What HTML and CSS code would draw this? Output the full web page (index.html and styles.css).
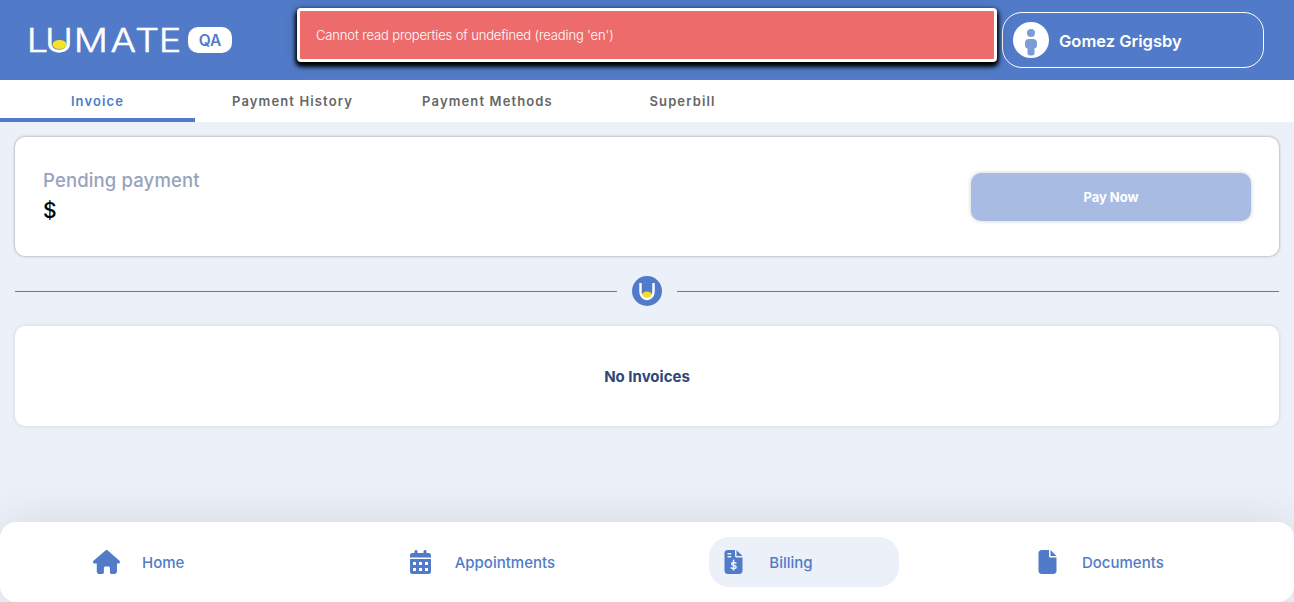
FILE: index.html
```
<!DOCTYPE html>
<html lang="en">
<head>
<meta charset="utf-8">
<title>Billing</title>
<link rel="stylesheet" href="styles.css">
</head>
<body>
<header class="header">
  <div class="brand">
    <svg class="logo" width="156" height="40" viewBox="0 0 156 40">
      <text class="logo-text" transform="scale(1.15 1)" y="32" x="0.600 16.600 41.600 73.500 94.800 115.500">LUMATE</text>
      <ellipse cx="33.500" cy="24.500" rx="7" ry="4.500" fill="#f4e428"/>
    </svg>
    <span class="badge">QA</span>
  </div>
  <div class="user">
    <svg class="avatar" width="36" height="36" viewBox="0 0 36 36">
      <circle cx="18" cy="18" r="18" fill="#fff"/>
      <circle cx="18" cy="11" r="4" fill="#7b9cd8"/>
      <path d="M16 17h4q4 0 4 4v2q0 3-2.500 3.500V31q0 2.500-2.500 2.500h-2q-2.500 0-2.500-2.500v-4.500Q12 26 12 23v-2q0-4 4-4z" fill="#7b9cd8"/>
    </svg>
    <span class="user-name">Gomez Grigsby</span>
  </div>
</header>
<div class="toast" role="alert"><span class="toast-text">Cannot read properties of undefined (reading 'en')</span></div>
<nav class="tabs">
  <a class="tab active"><span>Invoice</span></a>
  <a class="tab"><span>Payment History</span></a>
  <a class="tab"><span>Payment Methods</span></a>
  <a class="tab"><span>Superbill</span></a>
</nav>
<main class="content">
  <section class="card pending">
    <div class="amount">
      <span class="caption">Pending payment</span>
      <span class="value">$</span>
    </div>
    <button class="pay" disabled>Pay Now</button>
  </section>
  <div class="divider">
    <span class="line"></span>
    <svg width="30" height="30" viewBox="0 0 30 30">
      <circle cx="15" cy="15" r="15" fill="#517bc8"/>
      <ellipse cx="15" cy="19" rx="5" ry="3.500" fill="#ecdf24"/>
      <path d="M8.500 7v9a6.500 7 0 0 0 13 0V7" fill="none" stroke="#fff" stroke-width="2.400"/>
    </svg>
    <span class="line"></span>
  </div>
  <section class="card empty"><span>No Invoices</span></section>
</main>
<nav class="bottom">
  <a class="item home">
    <svg width="27" height="24" viewBox="0 0 576 512"><path d="M575.800 255.500c0 18-15 32.100-32 32.100h-32l.7 160.200c0 35-22 64.200-56 64.200h-56c-22 0-40-18-40-40v-88.300c0-17.700-14.300-32-32-32h-64c-17.700 0-32 14.300-32 32V472c0 22-18 40-40 40h-56c-34 0-56-28-56-56V287.600H32c-18 0-32-14-32-32.100 0-9 3-17 10-24L266.400 8c7-7 15-8 22-8s15 2 21 7l255.400 224.500c8 7 12 15 11 24z"/></svg>
    <span>Home</span>
  </a>
  <a class="item appointments">
    <svg width="21" height="24" viewBox="0 0 448 512"><path fill-rule="evenodd" d="M128 0c17.700 0 32 14.300 32 32v32h128V32c0-17.700 14.300-32 32-32s32 14.300 32 32v32h48c26.500 0 48 21.500 48 48v48H0v-48c0-26.500 21.500-48 48-48h48V32c0-17.700 14.300-32 32-32zM0 192h448v272c0 26.500-21.500 48-48 48H48c-26.500 0-48-21.500-48-48zM64 256v64h64v-64zm128 0v64h64v-64zm128 0v64h64v-64zM64 384v64h64v-64zm128 0v64h64v-64zm128 0v64h64v-64z"/></svg>
    <span>Appointments</span>
  </a>
  <a class="item billing">
    <svg width="19" height="24" viewBox="0 0 384 512"><path fill-rule="evenodd" d="M64 0C28.700 0 0 28.700 0 64v384c0 35.300 28.700 64 64 64h256c35.300 0 64-28.700 64-64V160H256c-17.700 0-32-14.300-32-32V0zm192 0v128h128zM64 64h80v32H64zm0 64h80v32H64z"/><path d="M244 278c-22-13-91-24-91 15 0 45 95 22 95 70 0 45-70 38-105 17M193 220v208" fill="none" stroke="#ecf1f9" stroke-width="32" stroke-linecap="round"/></svg>
    <span>Billing</span>
  </a>
  <a class="item documents">
    <svg width="19" height="24" viewBox="0 0 384 512"><path d="M0 64C0 28.700 28.700 0 64 0h160v128c0 17.700 14.300 32 32 32h128v288c0 35.300-28.700 64-64 64H64c-35.300 0-64-28.700-64-64zm384 64H256V0z"/></svg>
    <span>Documents</span>
  </a>
</nav>
</body>
</html>
```
FILE: styles.css
```
* { box-sizing: border-box; }
body {
  margin: 0;
  height: 602px;
  display: flex;
  flex-direction: column;
  overflow: hidden;
  background: #ecf1f9;
  font-family: Inter, "Liberation Sans", sans-serif;
}
.header {
  height: 80px;
  flex: none;
  display: flex;
  align-items: center;
  justify-content: space-between;
  padding: 0 30px 0 26px;
  background: #517bc8;
}
.brand { display: flex; align-items: center; gap: 6px; }
.logo { overflow: visible; }
.logo-text { font: 300 33px Inter, sans-serif; fill: #fff; stroke: #fff; stroke-width: .5px; }
.badge {
  width: 44px;
  height: 26px;
  border-radius: 10px;
  background: #fff;
  color: #517bc8;
  font-size: 15.500px;
  font-weight: 600;
  line-height: 27px;
  text-align: center;
}
.user {
  width: 262px;
  height: 56px;
  display: flex;
  align-items: center;
  gap: 10px;
  padding-left: 10px;
  border: 1px solid #fff;
  border-radius: 20px;
  color: #fff;
}
.user-name { font-size: 16.500px; font-weight: 600; padding-top: 2px; }
.toast {
  position: absolute;
  left: 297px;
  top: 8px;
  width: 700px;
  height: 54px;
  display: flex;
  align-items: center;
  padding-left: 16px;
  background: #ee6b6c;
  border: 3px solid #fff;
  border-radius: 4px;
  box-shadow: 0 3px 5px 1px #000, 0 3px 5px #000, 0 1px 18px rgba(0, 0, 0, .12);
  color: #fff;
  font-size: 13px;
  font-weight: 300;
  letter-spacing: -.14px;
}
.tabs { height: 42px; flex: none; display: flex; background: #fff; }
.tab {
  width: 195px;
  display: flex;
  justify-content: center;
  padding-top: 13px;
  border-bottom: 4px solid transparent;
  color: #666;
  font-size: 13px;
  line-height: 17px;
  font-weight: 600;
  letter-spacing: 1.130px;
}
.tab.active { border-color: #517bc8; color: #517bc8; }
.content { flex: 1; padding: 15px 15px 0; }
.card { background: #fff; border-radius: 10px; }
.pending {
  height: 119px;
  display: flex;
  align-items: center;
  justify-content: space-between;
  padding: 0 28px;
  box-shadow: 0 0 3px rgba(0, 0, 0, .4);
}
.amount { display: flex; flex-direction: column; gap: 4px; padding-bottom: 2px; }
.caption { color: #97a3bd; font-size: 18.500px; line-height: 26px; font-weight: 500; letter-spacing: .14px; }
.value { color: #000; font-size: 21px; line-height: 28px; font-weight: 500; }
.pay {
  width: 280px;
  height: 48px;
  border: 0;
  border-radius: 10px;
  background: #a8bbe3;
  box-shadow: 0 0 4px rgba(0, 0, 0, .2);
  color: #fff;
  font: 700 13px Inter, sans-serif;
}
.divider { display: flex; align-items: center; gap: 15px; height: 70px; }
.line { flex: 1; height: 1px; background: #517bc8; }
.empty {
  height: 100px;
  display: flex;
  align-items: center;
  justify-content: center;
  box-shadow: 0 0 4px rgba(0, 0, 0, .12);
  color: #2d4677;
  font-size: 15px;
  font-weight: 700;
}
.bottom {
  height: 80px;
  flex: none;
  display: flex;
  align-items: center;
  justify-content: space-between;
  padding: 0 80px;
  background: #fff;
  border-radius: 16px;
  box-shadow: 0 0 50px rgba(0, 0, 0, .1);
}
.item {
  width: 190px;
  height: 50px;
  display: flex;
  align-items: center;
  gap: 26px;
  padding-left: 15px;
  border-radius: 20px;
  color: #517bc8;
  font-size: 15px;
  font-weight: 500;
}
.item svg { fill: #517bc8; flex: none; }
.home { gap: 22px; padding-left: 13px; }
.appointments { gap: 24px; }
.documents { gap: 25px; padding-left: 14px; }
.billing { background: #ecf1f9; }
```
